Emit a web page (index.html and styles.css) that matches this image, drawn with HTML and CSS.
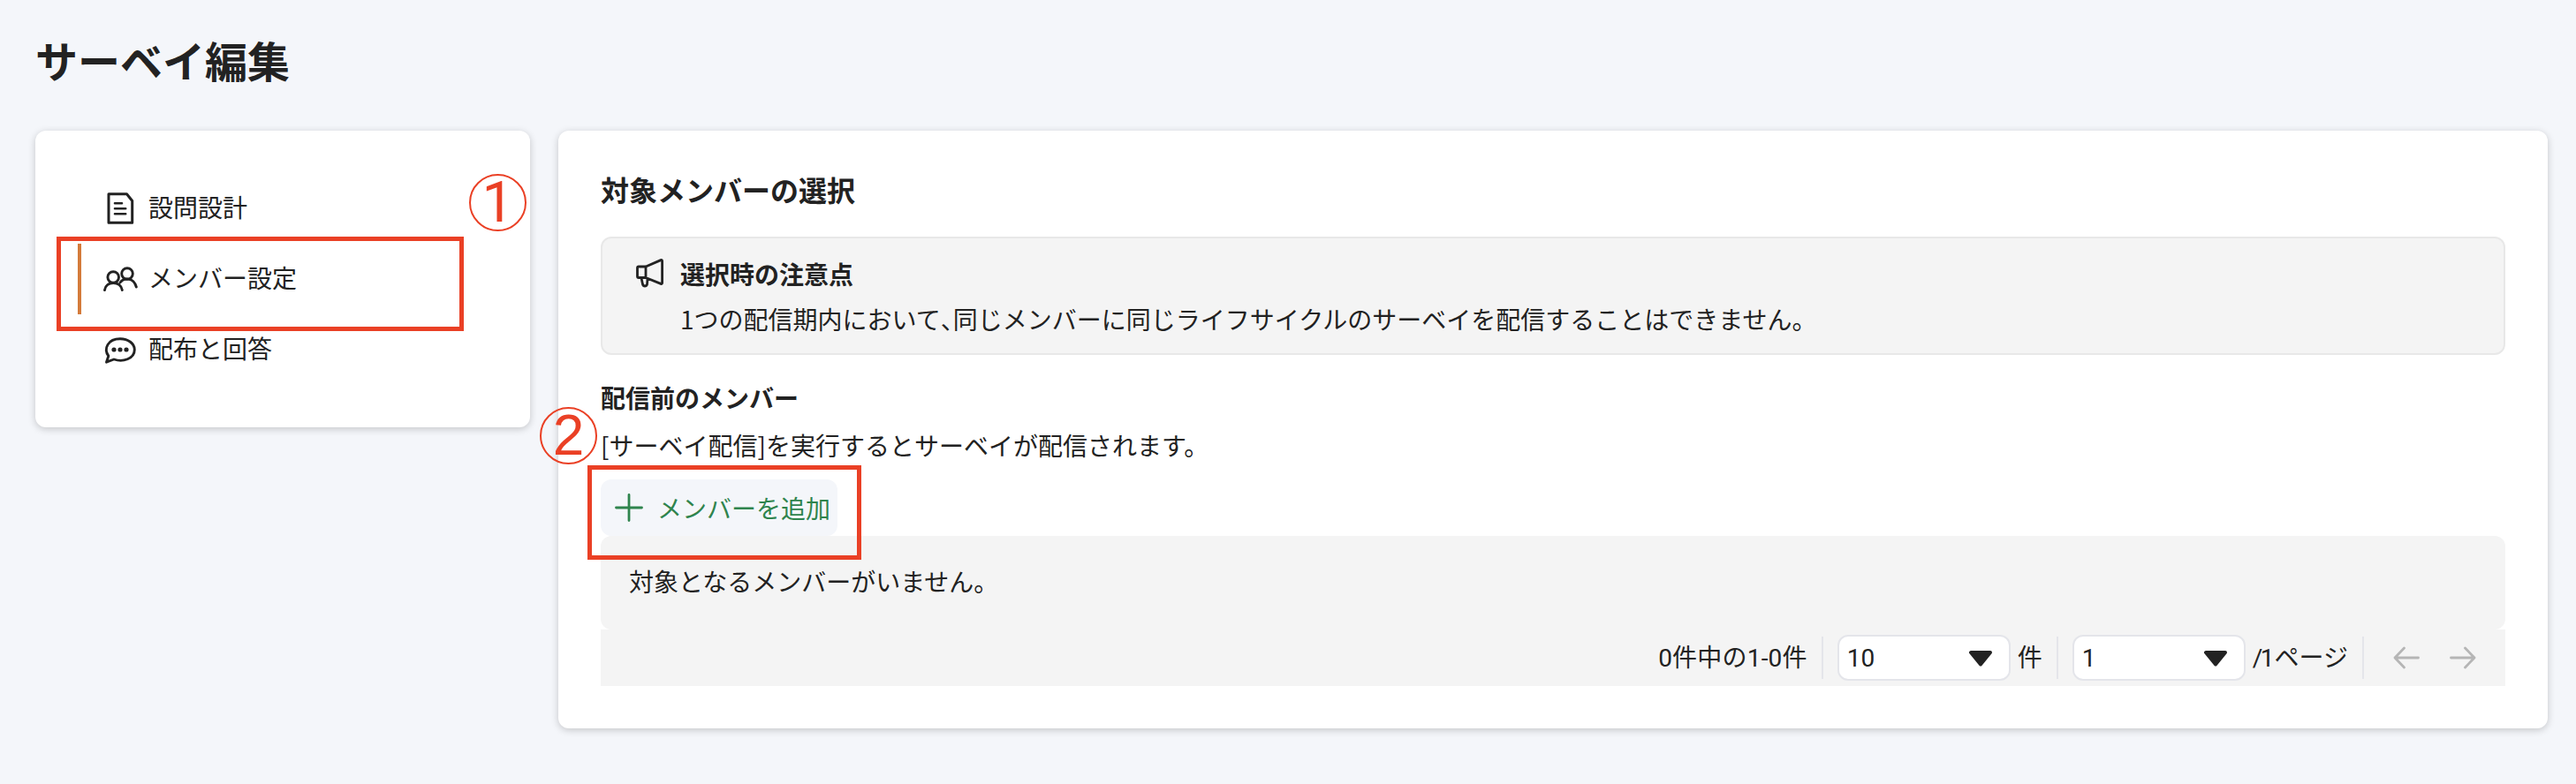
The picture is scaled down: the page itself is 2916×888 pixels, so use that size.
FILE: index.html
```html
<!DOCTYPE html>
<html lang="ja">
<head>
<meta charset="utf-8">
<title>サーベイ編集</title>
<link rel="stylesheet" href="styles.css">
</head>
<body>
<h1 class="page-title">サーベイ編集</h1>
<div class="layout">
  <nav class="card sidebar">
    <a class="nav-item">
      <svg class="nav-icon" viewBox="0 0 40 40" fill="none" stroke="currentColor" stroke-width="3" stroke-linejoin="round" stroke-linecap="round"><path d="M7 3.700h20.500l6.200 7.800v24.800H7z"/><path d="M14 14.200h8M14 20.200h12.200M14 26.200h12.200" stroke-width="2.600"/></svg>
      <span class="nav-label">設問設計</span>
    </a>
    <a class="nav-item active">
      <svg class="nav-icon" viewBox="0 0 40 40" fill="none" stroke="currentColor" stroke-width="2.900" stroke-linecap="round"><circle cx="12.200" cy="18" r="6.300"/><circle cx="28" cy="14" r="6.300"/><path d="M2.500 32.500C4 21.800 20.500 21.800 22.300 32.500M20 24C24 18.500 35 17.500 38.300 29"/></svg>
      <span class="nav-label">メンバー設定</span>
    </a>
    <a class="nav-item">
      <svg class="nav-icon" viewBox="0 0 40 40" fill="none" stroke="currentColor" stroke-width="2.900" stroke-linejoin="round"><path d="M6.800 27.200C1 19 6 7.700 20 7.700C29 7.700 36.300 13 36.300 20C36.300 30.500 23 34.500 13 31L4.500 34.200z"/><g fill="currentColor" stroke="none"><circle cx="13" cy="20" r="2.600"/><circle cx="20" cy="20" r="2.600"/><circle cx="27" cy="20" r="2.600"/></g></svg>
      <span class="nav-label">配布と回答</span>
    </a>
  </nav>
  <main class="card content">
    <h2 class="section-title">対象メンバーの選択</h2>
    <section class="notice">
      <svg class="notice-icon" viewBox="0 0 36 36" fill="none" stroke="currentColor" stroke-width="2.800" stroke-linejoin="round"><path d="M3.500 11.500q0-1.500 1.500-1.500h8l17-7.400q1.600-.5 1.600 1.200v24.400q0 1.700-1.600 1.200L13 22.500H5q-1.500 0-1.500-1.500zM13 10v12.500M8 23l1.500 7q.6 2 2.500 2t2.500-2l.5-6"/></svg>
      <div>
        <h3 class="notice-title">選択時の注意点</h3>
        <p class="text">1つの配信期内において<span class="half">、</span>同じメンバーに同じライフサイクルのサーベイを配信することはできません。</p>
      </div>
    </section>
    <h3 class="sub-title">配信前のメンバー</h3>
    <p class="text lead">[サーベイ配信]を実行するとサーベイが配信されます。</p>
    <button class="add-button">
      <svg class="plus" viewBox="0 0 32 32" stroke="currentColor" stroke-width="2.800" stroke-linecap="round"><path d="M16 1.500v29M1.500 16h29"/></svg>
      <span>メンバーを追加</span>
    </button>
    <div class="empty">対象となるメンバーがいません。</div>
    <div class="pager">
      <span class="total">0件中の1-0件</span>
      <i class="divider"></i>
      <div class="select"><span>10</span><svg class="caret" viewBox="0 0 28 18"><path d="M3 2h22L14 15.500z" fill="currentColor" stroke="currentColor" stroke-width="4" stroke-linejoin="round"/></svg></div>
      <span class="unit">件</span>
      <i class="divider"></i>
      <div class="select"><span>1</span><svg class="caret" viewBox="0 0 28 18"><path d="M3 2h22L14 15.500z" fill="currentColor" stroke="currentColor" stroke-width="4" stroke-linejoin="round"/></svg></div>
      <span class="unit"><span class="slash">/</span>1ページ</span>
      <i class="divider"></i>
      <div class="arrows">
        <svg class="arrow" viewBox="0 0 32 28"><path d="M13.500 3L3 14l10.500 11M3 14h26.500"/></svg>
        <svg class="arrow" viewBox="0 0 32 28"><path d="M18.500 3L29 14 18.500 25M29 14H2.500"/></svg>
      </div>
    </div>
  </main>
</div>
<div class="mark-box mark-box-nav"></div>
<div class="mark-box mark-box-add"></div>
<div class="mark-number mark-number-nav">1</div>
<div class="mark-number mark-number-add">2</div>
</body>
</html>
```
FILE: styles.css
```css
* { box-sizing: border-box; }
body {
  margin: 0;
  min-height: 888px;
  padding: 32px 32px 0 40px;
  background: #f4f6fa;
  color: #222;
  font: 28px/42px "Noto Sans CJK JP", sans-serif;
  position: relative;
}
h1, h2, h3, p { margin: 0; font-weight: 700; }
svg { display: block; flex: none; }
.page-title { font-size: 48px; line-height: 70px; margin-bottom: 46px; }
.layout { display: flex; align-items: flex-start; gap: 32px; }
.card {
  background: #fff;
  border-radius: 12px;
  box-shadow: 0 2px 8px rgba(0, 0, 0, .2);
}
.sidebar { width: 560px; height: 336px; padding: 48px; flex: none; }
.nav-item {
  display: flex;
  align-items: center;
  height: 80px;
  padding-left: 24px;
  gap: 12px;
  border-left: 4px solid transparent;
}
.nav-item.active { border-left-color: #d47a3a; }
.nav-icon { width: 40px; height: 40px; }
.nav-label { padding-bottom: 4px; }
.content { flex: 1; height: 677px; padding: 42px 48px 48px; }
.section-title { font-size: 32px; line-height: 48px; margin-bottom: 30px; }
.notice {
  display: flex;
  gap: 16px;
  height: 134px;
  padding: 19px 36px;
  border: 2px solid #e8e8e8;
  border-radius: 12px;
  background: #f4f4f4;
}
.notice-icon { width: 36px; height: 36px; margin-top: 3px; }
.notice-title { font-size: 28px; line-height: 42px; margin-bottom: 9px; }
.text { font-weight: 400; }
.half { font-feature-settings: "halt"; }
.sub-title { font-size: 28px; line-height: 42px; margin: 27px 0 12px; }
.lead { margin-bottom: 18px; }
.add-button {
  display: flex;
  align-items: center;
  gap: 16px;
  width: 268px;
  height: 64px;
  padding: 0 8px 0 16px;
  border: 0;
  border-radius: 12px;
  background: #f4f6fa;
  color: #2f844d;
  font: inherit;
  white-space: nowrap;
}
.plus { width: 32px; height: 32px; }
.empty { height: 106px; padding: 30px 32px; border-radius: 12px; background: #f4f4f4; }
.pager {
  display: flex;
  align-items: center;
  justify-content: flex-end;
  height: 64px;
  padding-right: 32px;
  background: #f4f4f4;
  font-family: Roboto, "Noto Sans CJK JP", sans-serif;
}
.pager span { padding-top: 1px; }
.total { letter-spacing: .2px; }
.slash { letter-spacing: -2.5px; }
.divider { width: 2px; height: 48px; margin: 0 16px; background: #e4e5ea; }
.select {
  display: flex;
  align-items: center;
  justify-content: space-between;
  width: 196px;
  height: 52px;
  padding: 0 18px 0 9px;
  border: 2px solid #e4e5ea;
  border-radius: 12px;
  background: #fff;
}
.caret { width: 28px; height: 18px; position: relative; top: 1px; }
.unit { margin-left: 8px; }
.arrows { display: flex; gap: 32px; margin-left: 16px; }
.arrow { width: 32px; height: 28px; fill: none; stroke: #b5b5b5; stroke-width: 2.8; stroke-linecap: round; stroke-linejoin: round; }
/* Numbered callouts over the page */
.mark-box { position: absolute; border: 5px solid #ea4025; }
.mark-box-nav { left: 64px; top: 268px; width: 461px; height: 107px; }
.mark-box-add { left: 665px; top: 527px; width: 310px; height: 107px; }
.mark-number {
  position: absolute;
  width: 65px;
  height: 65px;
  border: 2px solid #ea4025;
  border-radius: 50%;
  color: #ea4025;
  font: 64px/61px Roboto, sans-serif;
  text-align: center;
}
.mark-number-nav { left: 531px; top: 197px; }
.mark-number-add { left: 611px; top: 461px; font-family: "Liberation Sans", sans-serif; }
```
